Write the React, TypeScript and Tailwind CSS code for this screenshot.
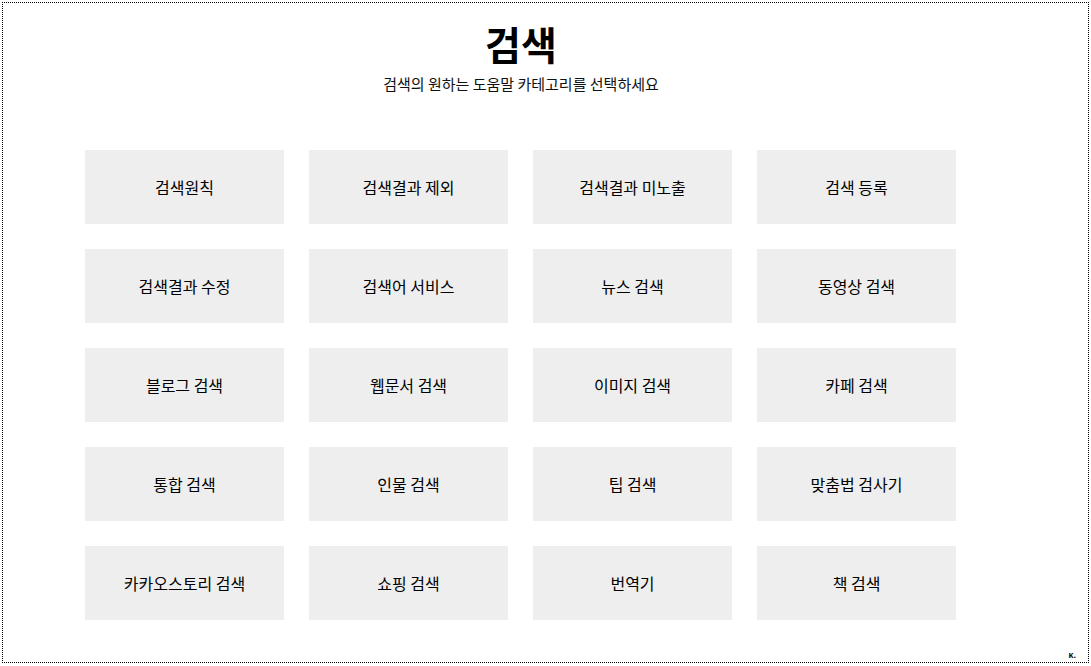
const items = [
  "검색원칙",
  "검색결과 제외",
  "검색결과 미노출",
  "검색 등록",
  "검색결과 수정",
  "검색어 서비스",
  "뉴스 검색",
  "동영상 검색",
  "블로그 검색",
  "웹문서 검색",
  "이미지 검색",
  "카페 검색",
  "통합 검색",
  "인물 검색",
  "팁 검색",
  "맞춤법 검사기",
  "카카오스토리 검색",
  "쇼핑 검색",
  "번역기",
  "책 검색",
];

export default function App() {
  return (
    <div
      className="w-[1091px] h-[666px] bg-white p-[2px]"
      style={{ fontFamily: '"Noto Sans CJK KR", "Noto Sans", sans-serif' }}
    >
      <div className="relative h-[661px] w-[1087px] border border-dotted border-black">
        <div className="ml-[82px] w-[872px] flex flex-col items-center">
          <h1 className="mt-[12px] text-[39px] leading-[56px] font-bold text-black">검색</h1>
          <p className="mt-[2px] text-[15px] leading-[22px] text-[#111]">
            검색의 원하는 도움말 카테고리를 선택하세요
          </p>
          <div className="mt-[55px] grid grid-cols-4 gap-x-[24px] gap-y-[25px] w-full">
            {items.map((label) => (
              <button
                key={label}
                className="h-[74px] w-[199px] bg-[#eeeeee] flex items-center justify-center text-[16px] text-black"
              >
                {label}
              </button>
            ))}
          </div>
        </div>
        <span className="absolute right-[12px] bottom-[3px] text-[8px] leading-none font-bold text-black">
          ĸ.
        </span>
      </div>
    </div>
  );
}
